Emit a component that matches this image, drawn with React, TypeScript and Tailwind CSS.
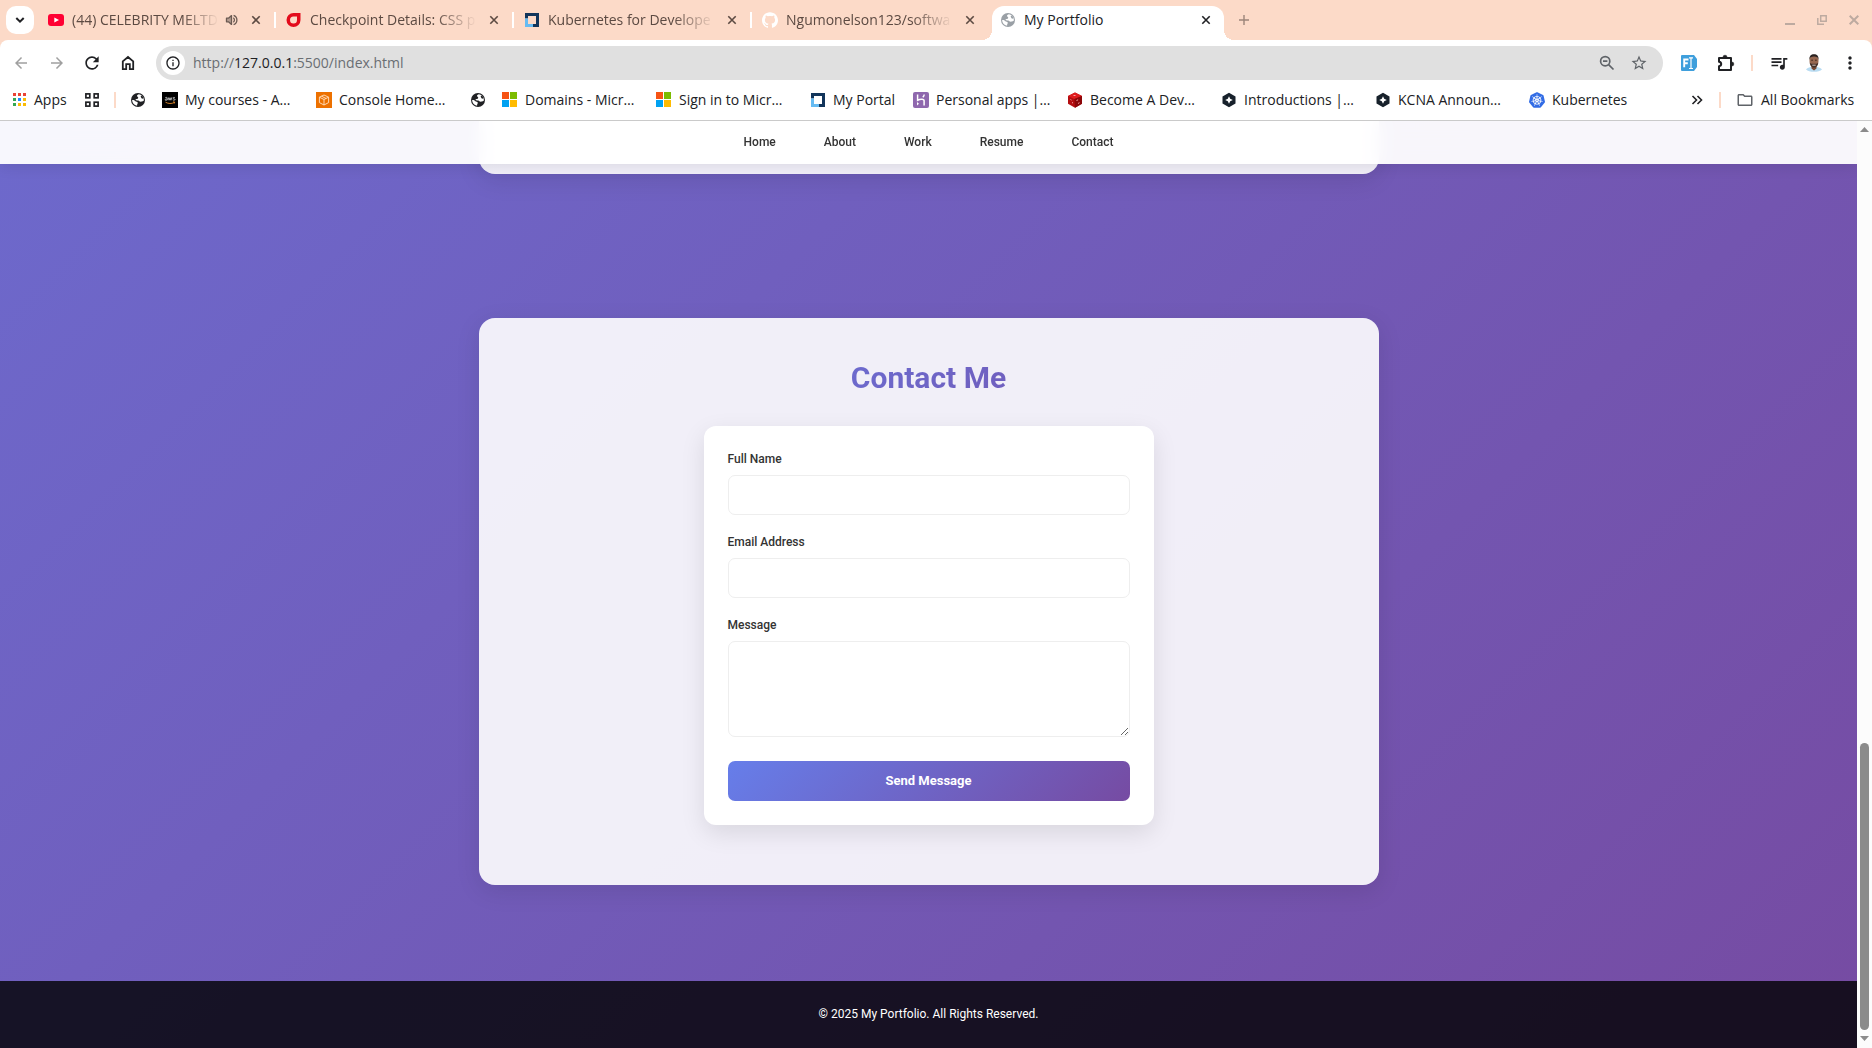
import type { ReactNode } from "react";
import { SiGithub, SiKubernetes } from "react-icons/si";
import {
  MdArrowBack,
  MdArrowForward,
  MdRefresh,
  MdOutlineInfo,
  MdStarBorder,
  MdQueueMusic,
  MdMoreVert,
  MdOutlineFolder,
} from "react-icons/md";

/* ---------- Icons ---------- */

function YoutubeIcon() {
  return (
    <svg viewBox="0 0 16 16" className="size-4 shrink-0">
      <rect x="0" y="2" width="16" height="12" rx="3" fill="#ff0033" />
      <path d="M6.3 5.4 11 8l-4.7 2.6z" fill="#fff" />
    </svg>
  );
}

function DropIcon() {
  return (
    <svg viewBox="0 0 16 16" className="size-4 shrink-0">
      <path d="M7.500 1h7v7a7 7 0 1 1-7-7z" fill="#e30b1c" />
      <path d="M7.500 4.500h3.500V8a3.500 3.500 0 1 1-3.500-3.500z" fill="#fcdac8" />
    </svg>
  );
}

function LinuxFoundationIcon() {
  return (
    <svg viewBox="0 0 16 16" className="size-4 shrink-0">
      <path d="M1 1h14v14H8v-3h4V4H4v2.500H1z" fill="#12355b" />
      <path d="M1 6.500h3V12h5v3H1z" fill="#66bbf2" />
    </svg>
  );
}

function GlobeIcon({ color, back }: { color: string; back: string }) {
  return (
    <svg viewBox="0 0 16 16" className="size-4 shrink-0">
      <circle cx="8" cy="8" r="7" fill={color} />
      <path
        d="M9 2.300c-1.200.3-2.200.9-2 1.800.2.800 1 .6 1.200 1.400.2.900-.6 1.500-1.700 1.500-1 0-1.300.9-.4 1.300 1 .4 1.900-.2 2.700.5.8.8 1.800 1 3.200.7 1-.2 1.700-.5 1.900-1.300A6 6 0 0 0 9 2.300z"
        fill={back}
      />
      <path d="M2.100 8.100c1.500-.2 2.400.3 3.300 1.200.700.700 1.800.4 2.300 1.100.5.800-.8 1.300-.6 3.400A6 6 0 0 1 2.100 8.100z" fill={back} />
      <path d="M11.500 3.500c-.9.400-1 1.200-.5 1.800.4.500.2 1.100.9 1.300.7.200 1.300-.1 1.700-.400-.3-1.200-1.100-2.100-2.100-2.700z" fill={color} />
    </svg>
  );
}

function SpeakerIcon() {
  return (
    <svg viewBox="0 0 14 14" className="size-3.5 shrink-0" fill="none" stroke="#6b5a52" strokeWidth="1.3">
      <path d="M1.500 5.200h2L6.500 2.600v8.800L3.500 8.800h-2z" strokeLinejoin="round" fill="#b59d91" />
      <path d="M8.300 4.800a2.700 2.700 0 0 1 0 4.400M8.600 2.300a5 5 0 0 1 0 9.400" />
    </svg>
  );
}

function CloseIcon({ color }: { color: string }) {
  return (
    <svg viewBox="0 0 10 10" className="size-2.5" fill="none" stroke={color} strokeWidth="1.600">
      <path d="M1.300 1.300 8.700 8.700M8.700 1.300 1.300 8.700" />
    </svg>
  );
}

function AppsIcon() {
  const colors = ["#ea4335", "#ea4335", "#ea4335", "#34a853", "#1a8cff", "#fbbc04", "#34a853", "#fbbc04", "#fbbc04"];
  return (
    <svg viewBox="0 0 14 14" className="size-3.5 shrink-0">
      {colors.map((c, i) => (
        <rect key={i} x={(i % 3) * 5 + 1} y={Math.floor(i / 3) * 5} width="3" height="3" fill={c} />
      ))}
    </svg>
  );
}

function TabGroupsIcon() {
  return (
    <svg viewBox="0 0 14 14" className="size-3.5 shrink-0" fill="none" stroke="#202124" strokeWidth="1.700">
      <rect x="0.900" y="0.900" width="3.900" height="3.900" />
      <rect x="9.200" y="0.900" width="3.900" height="3.900" />
      <rect x="0.900" y="9.200" width="3.900" height="3.900" />
      <rect x="9.200" y="9.200" width="3.900" height="3.900" />
    </svg>
  );
}

function AwsIcon() {
  return (
    <svg viewBox="0 0 16 16" className="size-4 shrink-0">
      <rect width="16" height="16" fill="#000" />
      <path d="M3.300 5.700c1-.6 1.900-.3 1.900.6v1.900M5.200 7c-1.200-.1-2 .2-2 .8 0 .8 1.400.8 2-.1M6.200 5.400l.9 2.800.9-2.500.9 2.500.9-2.800M13 5.700c-.8-.5-2-.3-2 .4 0 .9 2 .4 2 1.400 0 .9-1.400.9-2.200.3" fill="none" stroke="#d8d8d8" strokeWidth=".8" />
      <path d="M3.500 10.200c2.800 1.700 6.200 1.700 8.800.3M11 9.900l1.700.1-.4 1.500" fill="none" stroke="#e08a2a" strokeWidth=".9" />
    </svg>
  );
}

function ConsoleIcon() {
  return (
    <svg viewBox="0 0 16 16" className="size-4 shrink-0">
      <rect width="16" height="16" fill="#ed7100" />
      <path d="M8 3l4.600 2.200v5.400L8 13l-4.600-2.400V5.200zM3.400 5.200 8 7.500l4.600-2.300M8 7.500V13M5.600 4.200l4.500 2.300" fill="none" stroke="#ffe3c6" strokeWidth=".9" strokeLinejoin="round" />
    </svg>
  );
}

function MicrosoftIcon() {
  return (
    <svg viewBox="0 0 16 16" className="size-4 shrink-0">
      <rect x="0" y="0" width="7" height="7" fill="#f65314" />
      <rect x="8" y="0" width="7" height="7" fill="#7cbb00" />
      <rect x="0" y="8" width="7" height="7" fill="#00a1f1" />
      <rect x="8" y="8" width="7" height="7" fill="#ffbb00" />
    </svg>
  );
}

function HerokuIcon() {
  return (
    <svg viewBox="0 0 16 16" className="size-4 shrink-0">
      <rect width="16" height="16" rx="2" fill="#8f68ae" />
      <path d="M4.600 2.500v5.700c2.800-1.300 6.500-1.500 6.500.6v4.700M11.200 2.500c-.1 1.200-.6 2-1.400 2.800" fill="none" stroke="#fff" strokeWidth="1.500" />
      <path d="M4 10v3.600l2-1.800z" fill="#fff" />
    </svg>
  );
}

function DiceIcon() {
  return (
    <svg viewBox="0 0 16 16" className="size-4 shrink-0">
      <path d="M8 .4 15 4v7.800l-7 4-7-4V4z" fill="#b40d10" />
      <path d="M1 4 8 .4 15 4 7.400 7z" fill="#e01c1e" />
      <path d="M7.400 7 15 4v7.800l-7 4z" fill="#8c0609" />
      <path d="M3.500 7.500l1 .6M5 10.500l1 .5M9.500 8.500l1.600-.7M11 11.500l1.500-.8M6.500 3.500h2" stroke="#ffb3b3" strokeWidth=".9" />
    </svg>
  );
}

function HexStarIcon() {
  return (
    <svg viewBox="0 0 16 16" className="size-4 shrink-0">
      <path d="M8 .8 14.500 4.400v7.200L8 15.200 1.500 11.600V4.400z" fill="#17212b" />
      <path d="M8 4.200 9.200 6.800 11.800 8 9.200 9.200 8 11.800 6.800 9.200 4.200 8l2.600-1.200z" fill="#fff" />
    </svg>
  );
}

function KubernetesIcon() {
  return <SiKubernetes className="size-4 shrink-0 text-[#326ce5]" />;
}

function ZoomOutIcon() {
  return (
    <svg viewBox="0 0 16 16" className="size-4" fill="none" stroke="#5f6368" strokeWidth="1.700">
      <circle cx="6.200" cy="6.200" r="4.600" />
      <path d="M9.600 9.600 14.500 14.500M4 6.200h4.400" />
    </svg>
  );
}

function FontExtensionIcon() {
  return (
    <svg viewBox="0 0 16 16" className="size-4">
      <path d="M1 0h12l3 4v8l-3 4H1a1 1 0 0 1-1-1V1a1 1 0 0 1 1-1z" fill="#3f9fdc" />
      <path d="M3.200 12.300V4.500H7.500M3.200 8.300h3.600" fill="none" stroke="#fff" strokeWidth="1.900" />
      <path d="M8 2.900h1.400l.6.600.6-.6H12M10 3.500v9.400M8 13.500h1.400l.6-.6.6.6H12" fill="none" stroke="#fff" strokeWidth="1.200" />
    </svg>
  );
}

function PuzzleIcon() {
  return (
    <svg viewBox="0 0 18 18" className="size-[18px]" fill="none" stroke="#202124" strokeWidth="2" strokeLinejoin="round">
      <path d="M2 4h12v12H2v-3.800c1.400-.2 2.200-1 2.200-2.200S3.400 8 2 7.800z" />
      <path d="M6 3.200a2 2 0 0 1 4 0zM14.800 8a2 2 0 0 1 0 4z" fill="#202124" strokeWidth=".6" />
    </svg>
  );
}

function AvatarIcon() {
  return (
    <svg viewBox="0 0 18 18" className="size-[18px]">
      <path d="M1 15.500c1-1.700 3.500-2 5.500-3h5c2 1 4.500 1.300 5.500 3-3 3.100-13 3.100-16 0z" fill="#b9dcf2" />
      <path d="M6.500 11h5v3.500L9 16.500 6.500 14.500z" fill="#7a4a33" />
      <ellipse cx="9" cy="7" rx="4.500" ry="6.300" fill="#966750" />
      <path d="M4.400 6C4.200 2 6 .3 9 .3s4.800 1.700 4.600 5.700C13 3.600 12 2.600 9 2.600S5 3.600 4.400 6z" fill="#2a2220" />
      <path d="M4.700 8.800c.3 3 2 4.900 4.300 4.900s4-1.900 4.300-4.900c-.9 1-2.400 1-4.300 1s-3.400 0-4.300-1z" fill="#43302a" />
      <path d="M7.300 11.200h3.400" stroke="#e8d5cc" strokeWidth=".9" />
      <path d="M6.300 6.200h1.600M10.100 6.200h1.600" stroke="#3a241b" strokeWidth="1" />
    </svg>
  );
}

/* ---------- Browser chrome ---------- */

type TabInfo = { title: string; icon: ReactNode; audio?: boolean; active?: boolean; last?: boolean };

const tabs: TabInfo[] = [
  { title: "(44) CELEBRITY MELTD", icon: <YoutubeIcon />, audio: true },
  { title: "Checkpoint Details: CSS p", icon: <DropIcon /> },
  { title: "Kubernetes for Develope", icon: <LinuxFoundationIcon /> },
  { title: "Ngumonelson123/softwa", icon: <SiGithub className="size-4 shrink-0 text-white" />, last: true },
  { title: "My Portfolio", icon: <GlobeIcon color="#9aa0a6" back="#fff" />, active: true },
];

function Tab({ title, icon, audio, active, last }: TabInfo) {
  return (
    <div
      role="tab"
      aria-selected={!!active}
      className={
        active
          ? "relative mt-1.5 mr-1 ml-0.5 flex h-[34px] w-[232px] items-center rounded-t-xl bg-white pb-1.5 pl-2 text-[#202124]"
          : "flex h-10 w-[238px] items-center pl-2.5 text-[#5c4a42]"
      }
    >
      {active && (
        <>
          <span className="absolute bottom-0 -left-2.5 size-2.5 bg-[radial-gradient(circle_at_0_0,transparent_10px,white_10px)]" />
          <span className="absolute -right-2.5 bottom-0 size-2.5 bg-[radial-gradient(circle_at_100%_0,transparent_10px,white_10px)]" />
        </>
      )}
      {icon}
      <span
        className={
          active
            ? "ml-2 flex-1 whitespace-nowrap"
            : "ml-2 min-w-0 flex-1 mask-r-from-75% whitespace-nowrap"
        }
      >
        {title}
      </span>
      {audio && (
        <span className="ml-1.5">
          <SpeakerIcon />
        </span>
      )}
      <button type="button" aria-label={"Close " + title} className="mr-[13px] ml-3 flex size-2.5 items-center justify-center">
        <CloseIcon color={active ? "#202124" : "#5c4a42"} />
      </button>
      {!active && <span className={last ? "w-0.5" : "h-4 w-0.5 bg-white"} />}
    </div>
  );
}

function TabStrip() {
  return (
    <header className="flex h-10 items-center bg-[#fcdac8] pl-1.5">
      <button type="button" aria-label="Search tabs" className="flex size-7 items-center justify-center rounded-[10px] bg-white">
        <svg viewBox="0 0 10 10" className="size-2.5" fill="none" stroke="#202124" strokeWidth="2">
          <path d="M1.300 3 5 6.700 8.700 3" />
        </svg>
      </button>
      <div role="tablist" className="ml-1 flex h-10">
        {tabs.map((t) => (
          <Tab key={t.title} {...t} />
        ))}
      </div>
      <button type="button" aria-label="New tab" className="ml-[11px]">
        <svg viewBox="0 0 10 10" className="size-2.5" stroke="#9c857a" strokeWidth="1.400">
          <path d="M5 0v10M0 5h10" />
        </svg>
      </button>
      <div className="mr-[13px] ml-auto flex items-center gap-[22px] text-[#bdaaa0]">
        <button type="button" aria-label="Minimize">
          <svg viewBox="0 0 10 10" className="size-2.5" stroke="currentColor" strokeWidth="2">
            <path d="M0 9h10" />
          </svg>
        </button>
        <button type="button" aria-label="Restore">
          <svg viewBox="0 0 10 10" className="size-2.5" fill="none" stroke="currentColor" strokeWidth="1.500">
            <path d="M3.700.8h5.500v5.500H3.700zM.8 3v6.200H7" />
          </svg>
        </button>
        <button type="button" aria-label="Close window">
          <svg viewBox="0 0 10 10" className="size-2.5" stroke="currentColor" strokeWidth="2">
            <path d="M.7.7l8.600 8.600M9.300.7.7 9.300" />
          </svg>
        </button>
      </div>
    </header>
  );
}

function Toolbar() {
  return (
    <div className="bg-[#fcdac8]">
      <div className="flex h-[46px] items-center rounded-t-lg bg-white pr-3 pl-3">
        <div className="flex w-36 shrink-0 items-center gap-4 text-[#202124]">
          <button type="button" aria-label="Back" className="text-[#a0a0a0]">
            <MdArrowBack className="size-[18px]" />
          </button>
          <button type="button" aria-label="Forward" className="ml-0.5 text-[#a0a0a0]">
            <MdArrowForward className="size-[18px]" />
          </button>
          <button type="button" aria-label="Reload">
            <MdRefresh className="size-5" />
          </button>
          <button type="button" aria-label="Home">
            <svg viewBox="0 0 20 20" className="size-5" fill="none" stroke="currentColor" strokeWidth="1.800">
              <path d="M4.800 16.200V8.300L10 4l5.200 4.300v7.900h-3.400v-5H8.200v5z" />
            </svg>
          </button>
        </div>
        <div className="flex h-[34px] flex-1 items-center rounded-full bg-[#e0e0e0] pr-[15px] pl-[5px]">
          <button type="button" aria-label="Site information" className="flex size-6 items-center justify-center rounded-full bg-white">
            <MdOutlineInfo className="size-4 text-[#202124]" />
          </button>
          <label htmlFor="address" className="relative ml-2 flex-1 text-[#6a6e73]">
            http://<span className="text-[#202124]">127.0.0.1</span>:5500/index.html
            <input id="address" type="text" className="absolute inset-0 w-full bg-transparent outline-none" />
          </label>
          <div className="flex items-center gap-[15px] text-[#5f6368]">
            <button type="button" aria-label="Zoom">
              <ZoomOutIcon />
            </button>
            <button type="button" aria-label="Bookmark this tab">
              <MdStarBorder className="size-[18px]" />
            </button>
          </div>
        </div>
        <div className="ml-[18px] flex items-center text-[#202124]">
          <button type="button" aria-label="Font extension" className="w-9">
            <FontExtensionIcon />
          </button>
          <button type="button" aria-label="Extensions">
            <PuzzleIcon />
          </button>
          <span className="mx-4 h-4 w-0.5 bg-[#fcdac8]" />
          <button type="button" aria-label="Media controls" className="w-9">
            <MdQueueMusic className="size-5" />
          </button>
          <button type="button" aria-label="Profile" className="w-[35px]">
            <AvatarIcon />
          </button>
          <button type="button" aria-label="Menu">
            <MdMoreVert className="size-5" />
          </button>
        </div>
      </div>
    </div>
  );
}

const bookmarks: { label: string; icon: ReactNode }[] = [
  { label: "My courses - A…", icon: <AwsIcon /> },
  { label: "Console Home…", icon: <ConsoleIcon /> },
  { label: "", icon: <GlobeIcon color="#202124" back="#fff" /> },
  { label: "Domains - Micr…", icon: <MicrosoftIcon /> },
  { label: "Sign in to Micr…", icon: <MicrosoftIcon /> },
  { label: "My Portal", icon: <LinuxFoundationIcon /> },
  { label: "Personal apps |…", icon: <HerokuIcon /> },
  { label: "Become A Dev…", icon: <DiceIcon /> },
  { label: "Introductions |…", icon: <HexStarIcon /> },
  { label: "KCNA Announ…", icon: <HexStarIcon /> },
  { label: "Kubernetes", icon: <KubernetesIcon /> },
];

function BookmarksBar() {
  return (
    <nav aria-label="Bookmarks" className="flex h-[35px] items-center border-b border-[#cacaca] bg-white pb-1.5 pl-3 whitespace-nowrap text-[#202124]">
      <a href="#apps" className="flex w-[73px] items-center gap-2">
        <AppsIcon />
        Apps
      </a>
      <a href="#groups" aria-label="Tab groups">
        <TabGroupsIcon />
      </a>
      <span className="mr-3.5 ml-[15px] h-4 w-0.5 bg-[#fcdac8]" />
      <a href="#site" aria-label="Site" className="w-8">
        <GlobeIcon color="#202124" back="#fff" />
      </a>
      {bookmarks.map((b, i) => (
        <a
          key={i}
          href={"#bookmark-" + i}
          aria-label={b.label || "Site"}
          className={
            b.label === ""
              ? "flex w-8 items-center"
              : b.label === "My Portal"
                ? "flex w-[103px] items-center gap-[7px]"
                : "flex w-[154px] items-center gap-[7px]"
          }
        >
          {b.icon}
          {b.label && <span>{b.label}</span>}
        </a>
      ))}
      <button type="button" aria-label="More bookmarks" className="ml-auto">
        <svg viewBox="0 0 12 12" className="size-3" fill="none" stroke="#202124" strokeWidth="1.600">
          <path d="M1.500 2 5.500 6l-4 4M6.500 2l4 4-4 4" />
        </svg>
      </button>
      <span className="mr-[15px] ml-4 h-4 w-0.5 bg-[#fcdac8]" />
      <a href="#all" className="mr-[15px] flex w-[121px] items-center gap-[7px]">
        <MdOutlineFolder className="size-[18px] shrink-0 text-[#5f6368]" />
        <span>All Bookmarks</span>
      </a>
    </nav>
  );
}

/* ---------- Portfolio page ---------- */

const links = ["Home", "About", "Work", "Resume", "Contact"];

const fieldClass =
  "block w-full rounded-[7px] border border-[#eeeeee] bg-white px-3 text-xs outline-none focus:border-[#667eea]";
const labelClass = "mb-1.5 block text-xs leading-[19px] font-medium text-[#333333]";

function ContactForm() {
  return (
    <form
      onSubmit={(e) => e.preventDefault()}
      className="mx-auto mb-6 w-full max-w-[450px] rounded-xl bg-white p-6 shadow-[0_8px_24px_rgba(0,0,0,0.1)]"
    >
      <div className="mb-[18px]">
        <label htmlFor="name" className={labelClass}>
          Full Name
        </label>
        <input id="name" type="text" className={fieldClass + " h-10"} />
      </div>
      <div className="mb-[18px]">
        <label htmlFor="email" className={labelClass}>
          Email Address
        </label>
        <input id="email" type="email" className={fieldClass + " h-10"} />
      </div>
      <div className="mb-6">
        <label htmlFor="message" className={labelClass}>
          Message
        </label>
        <textarea id="message" className={fieldClass + " h-24 resize-y py-2"} />
      </div>
      <button
        type="submit"
        className="h-10 w-full rounded-[7px] bg-[linear-gradient(135deg,#667eea,#764ba2)] text-[13px] font-bold text-white"
      >
        Send Message
      </button>
    </form>
  );
}

function PortfolioPage() {
  return (
    <div className="flex min-w-0 flex-1 flex-col overflow-hidden bg-[linear-gradient(135deg,#6d69cc,#764ba2)] font-['Roboto',sans-serif]">
      <nav className="z-10 flex h-[43px] shrink-0 items-center justify-center gap-12 bg-white/95 pb-0.5 text-xs font-medium text-[#333333] shadow-[0_2px_15px_rgba(0,0,0,0.1)] backdrop-blur-[8px]">
        {links.map((l) => (
          <a key={l} href={"#" + l.toLowerCase()}>
            {l}
          </a>
        ))}
      </nav>
      <main className="-mt-[43px] flex-1 px-6">
        <section className="mx-auto h-[53px] max-w-[900px] rounded-b-2xl bg-white/90 shadow-[0_6px_24px_rgba(0,0,0,0.1)]" />
        <section
          id="contact"
          className="mx-auto mt-36 max-w-[900px] rounded-2xl bg-white/90 p-9 shadow-[0_6px_24px_rgba(0,0,0,0.1)]"
        >
          <h2 className="mb-6 bg-[linear-gradient(135deg,#667eea,#764ba2)] bg-clip-text text-center text-3xl leading-[48px] font-bold text-transparent">
            Contact Me
          </h2>
          <ContactForm />
        </section>
      </main>
      <footer className="flex h-[67px] shrink-0 items-center justify-center bg-black/80 pb-0.5 text-xs text-white">
        <p>© 2025 My Portfolio. All Rights Reserved.</p>
      </footer>
    </div>
  );
}

function PageScrollbar() {
  return (
    <div aria-hidden="true" className="flex w-[15px] shrink-0 flex-col items-center bg-[#fcfcfc] pt-1.5 pb-[7px]">
      <svg viewBox="0 0 9 5" className="h-[5px] w-[9px]" fill="#8b8b8b">
        <path d="M0 5 4.500 0 9 5z" />
      </svg>
      <div className="mb-1.5 flex w-[9px] flex-1 flex-col justify-end">
        <div className="h-[32%] rounded-full bg-[#8b8b8b]" />
      </div>
      <svg viewBox="0 0 9 5" className="h-[5px] w-[9px]" fill="#8b8b8b">
        <path d="M0 0 4.500 5 9 0z" />
      </svg>
    </div>
  );
}

export default function App() {
  return (
    <div className="flex h-screen flex-col overflow-hidden font-['Open_Sans',sans-serif] text-sm">
      <TabStrip />
      <Toolbar />
      <BookmarksBar />
      <div className="flex min-h-0 flex-1">
        <PortfolioPage />
        <PageScrollbar />
      </div>
    </div>
  );
}
